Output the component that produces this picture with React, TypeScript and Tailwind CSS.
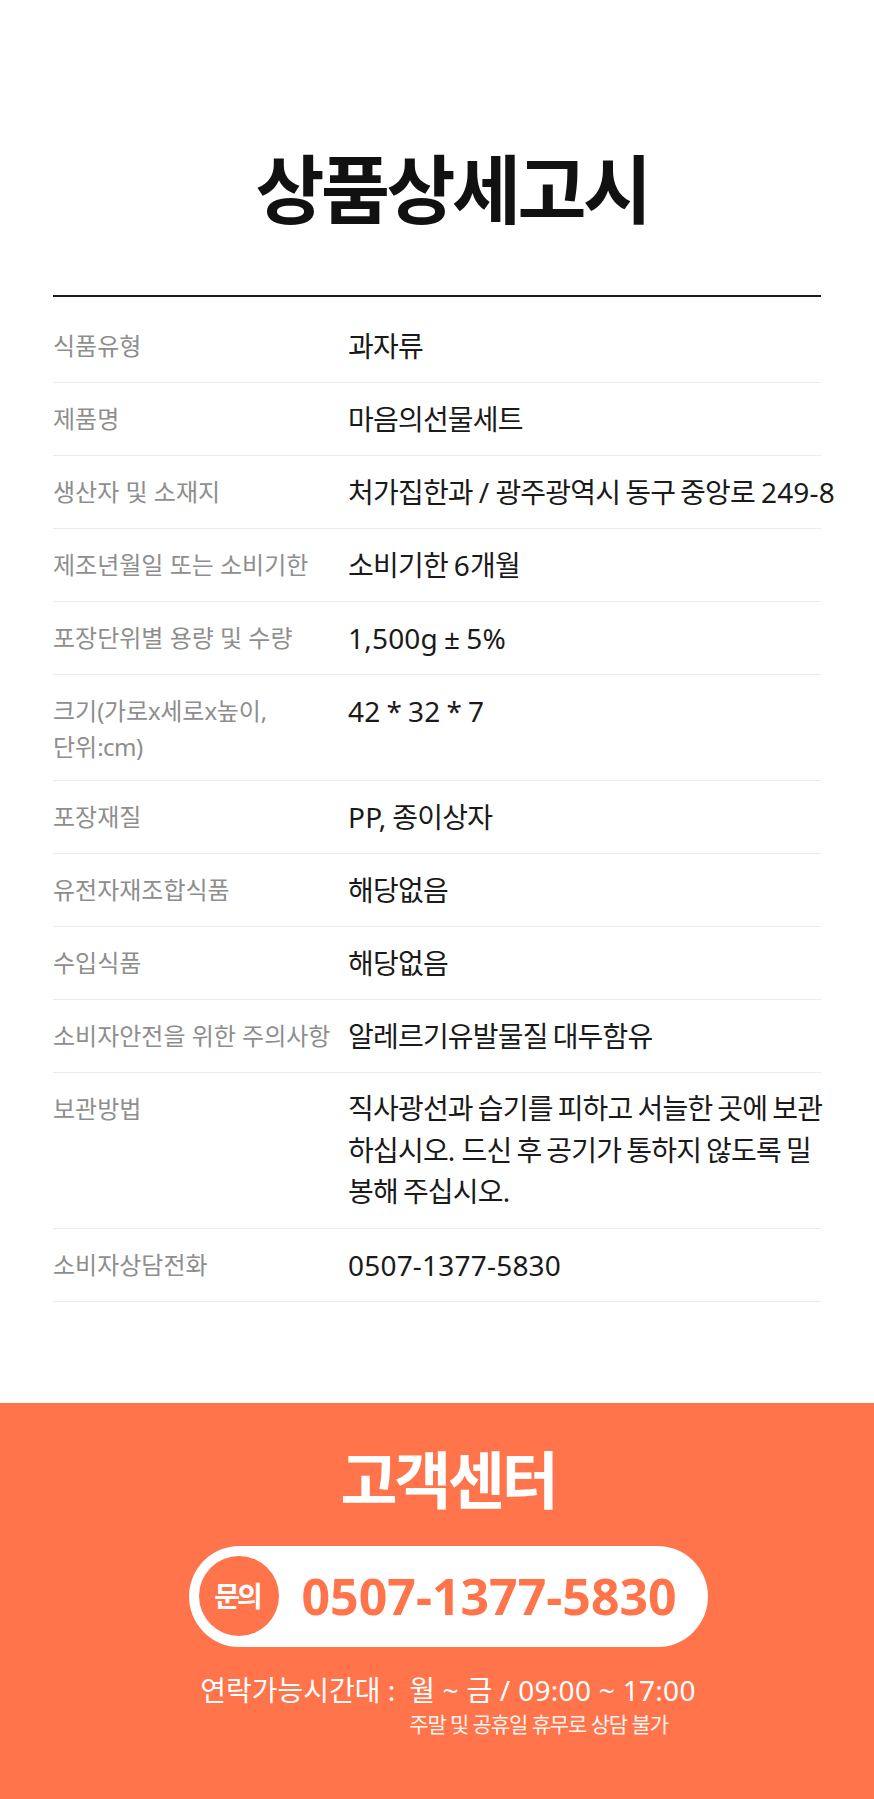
import React from "react";

const FONT = "font-[family-name:'Noto_Sans','Noto_Sans_CJK_KR',sans-serif]";

function Mixed({ text, ko, lat }: { text: string; ko: string; lat: string }) {
  const parts = text.split(/([가-힣]+(?:\s+[가-힣]+)*)/);
  return (
    <>
      {parts.map((p, i) =>
        p ? (
          <span key={i} className={/[가-힣]/.test(p) ? ko : lat}>
            {p}
          </span>
        ) : null
      )}
    </>
  );
}

type Row = { label: string[]; value: string[]; tall?: boolean };

const rows: Row[] = [
  { label: ["식품유형"], value: ["과자류"] },
  { label: ["제품명"], value: ["마음의선물세트"] },
  { label: ["생산자 및 소재지"], value: ["처가집한과 / 광주광역시 동구 중앙로 249-8"] },
  { label: ["제조년월일 또는 소비기한"], value: ["소비기한 6개월"] },
  { label: ["포장단위별 용량 및 수량"], value: ["1,500g ± 5%"] },
  { label: ["크기(가로x세로x높이,", "단위:cm)"], value: ["42 * 32 * 7"] },
  { label: ["포장재질"], value: ["PP, 종이상자"] },
  { label: ["유전자재조합식품"], value: ["해당없음"] },
  { label: ["수입식품"], value: ["해당없음"] },
  { label: ["소비자안전을 위한 주의사항"], value: ["알레르기유발물질 대두함유"] },
  {
    label: ["보관방법"],
    value: [
      "직사광선과 습기를 피하고 서늘한 곳에 보관",
      "하십시오. 드신 후 공기가 통하지 않도록 밀",
      "봉해 주십시오.",
    ],
    tall: true,
  },
  { label: ["소비자상담전화"], value: ["0507-1377-5830"] },
];

export default function App() {
  return (
    <div className={`${FONT} w-[874px] min-h-[1799px] bg-white flex flex-col`}>
      {/* Title */}
      <div className="pt-[152px] flex justify-center pl-[30px]">
        <h1 className="text-[75px] leading-[75px] font-bold tracking-[-3.5px] text-[#111111]">
          상품상세고시
        </h1>
      </div>

      <div className="mx-[53px] mt-[68px] h-[2px] bg-[#1c1c1c]" />

      {/* Table */}
      <div className="mx-[53px] mt-[13px] flex flex-col">
        {rows.map((r, i) => (
          <div key={i} className="flex items-start border-b border-[#ececec] py-[15px]">
            <div className="w-[295px] shrink-0 pt-[3px] text-[24px] leading-[36px] text-[#8e8e8e] whitespace-nowrap">
              {r.label.map((l, j) => (
                <div key={j}>
                  <Mixed text={l} ko="tracking-[0px]" lat="tracking-[-0.5px]" />
                </div>
              ))}
            </div>
            <div
              className={`flex-1 text-[28px] text-[#1a1a1a] whitespace-nowrap [word-spacing:-1.5px] ${
                r.tall ? "leading-[41.5px]" : "leading-[42px]"
              }`}
            >
              {r.value.map((v, j) => (
                <div key={j}>
                  <Mixed text={v} ko="tracking-[-0.8px]" lat="tracking-[0.2px]" />
                </div>
              ))}
            </div>
          </div>
        ))}
      </div>

      {/* Customer center */}
      <div className="mt-[101px] flex-1 bg-[#ff744b] flex flex-col items-center pl-[22px] pt-[46px] pb-[60px]">
        <div className="text-[62px] leading-[62px] font-bold tracking-[-3.3px] text-white">
          고객센터
        </div>

        <div className="mt-[35px] w-[519px] h-[101px] rounded-full bg-white flex items-center pl-[10px]">
          <div className="w-[80px] h-[80px] rounded-full bg-[#ff744b] flex items-center justify-center">
            <span className="text-[28px] leading-none font-bold tracking-[-3px] text-white pr-[3px]">
              문의
            </span>
          </div>
          <span className="ml-[23px] text-[50px] leading-none font-bold text-[#ff744b]">
            0507-1377-5830
          </span>
        </div>

        <div className="mt-[25px] flex items-start text-white">
          <div className="w-[209px] text-[28px] leading-[36px] whitespace-nowrap">
            <Mixed text="연락가능시간대" ko="tracking-[0px]" lat="" />
            <span> :</span>
          </div>
          <div className="flex flex-col whitespace-nowrap">
            <div className="text-[28px] leading-[36px]">
              <Mixed text="월 ~ 금 / 09:00 ~ 17:00" ko="tracking-[0px]" lat="tracking-[0.3px]" />
            </div>
            <div className="mt-[2.5px] text-[21px] leading-[28px] text-[#fff3ee] tracking-[-1.1px]">
              주말 및 공휴일 휴무로 상담 불가
            </div>
          </div>
        </div>
      </div>
    </div>
  );
}
